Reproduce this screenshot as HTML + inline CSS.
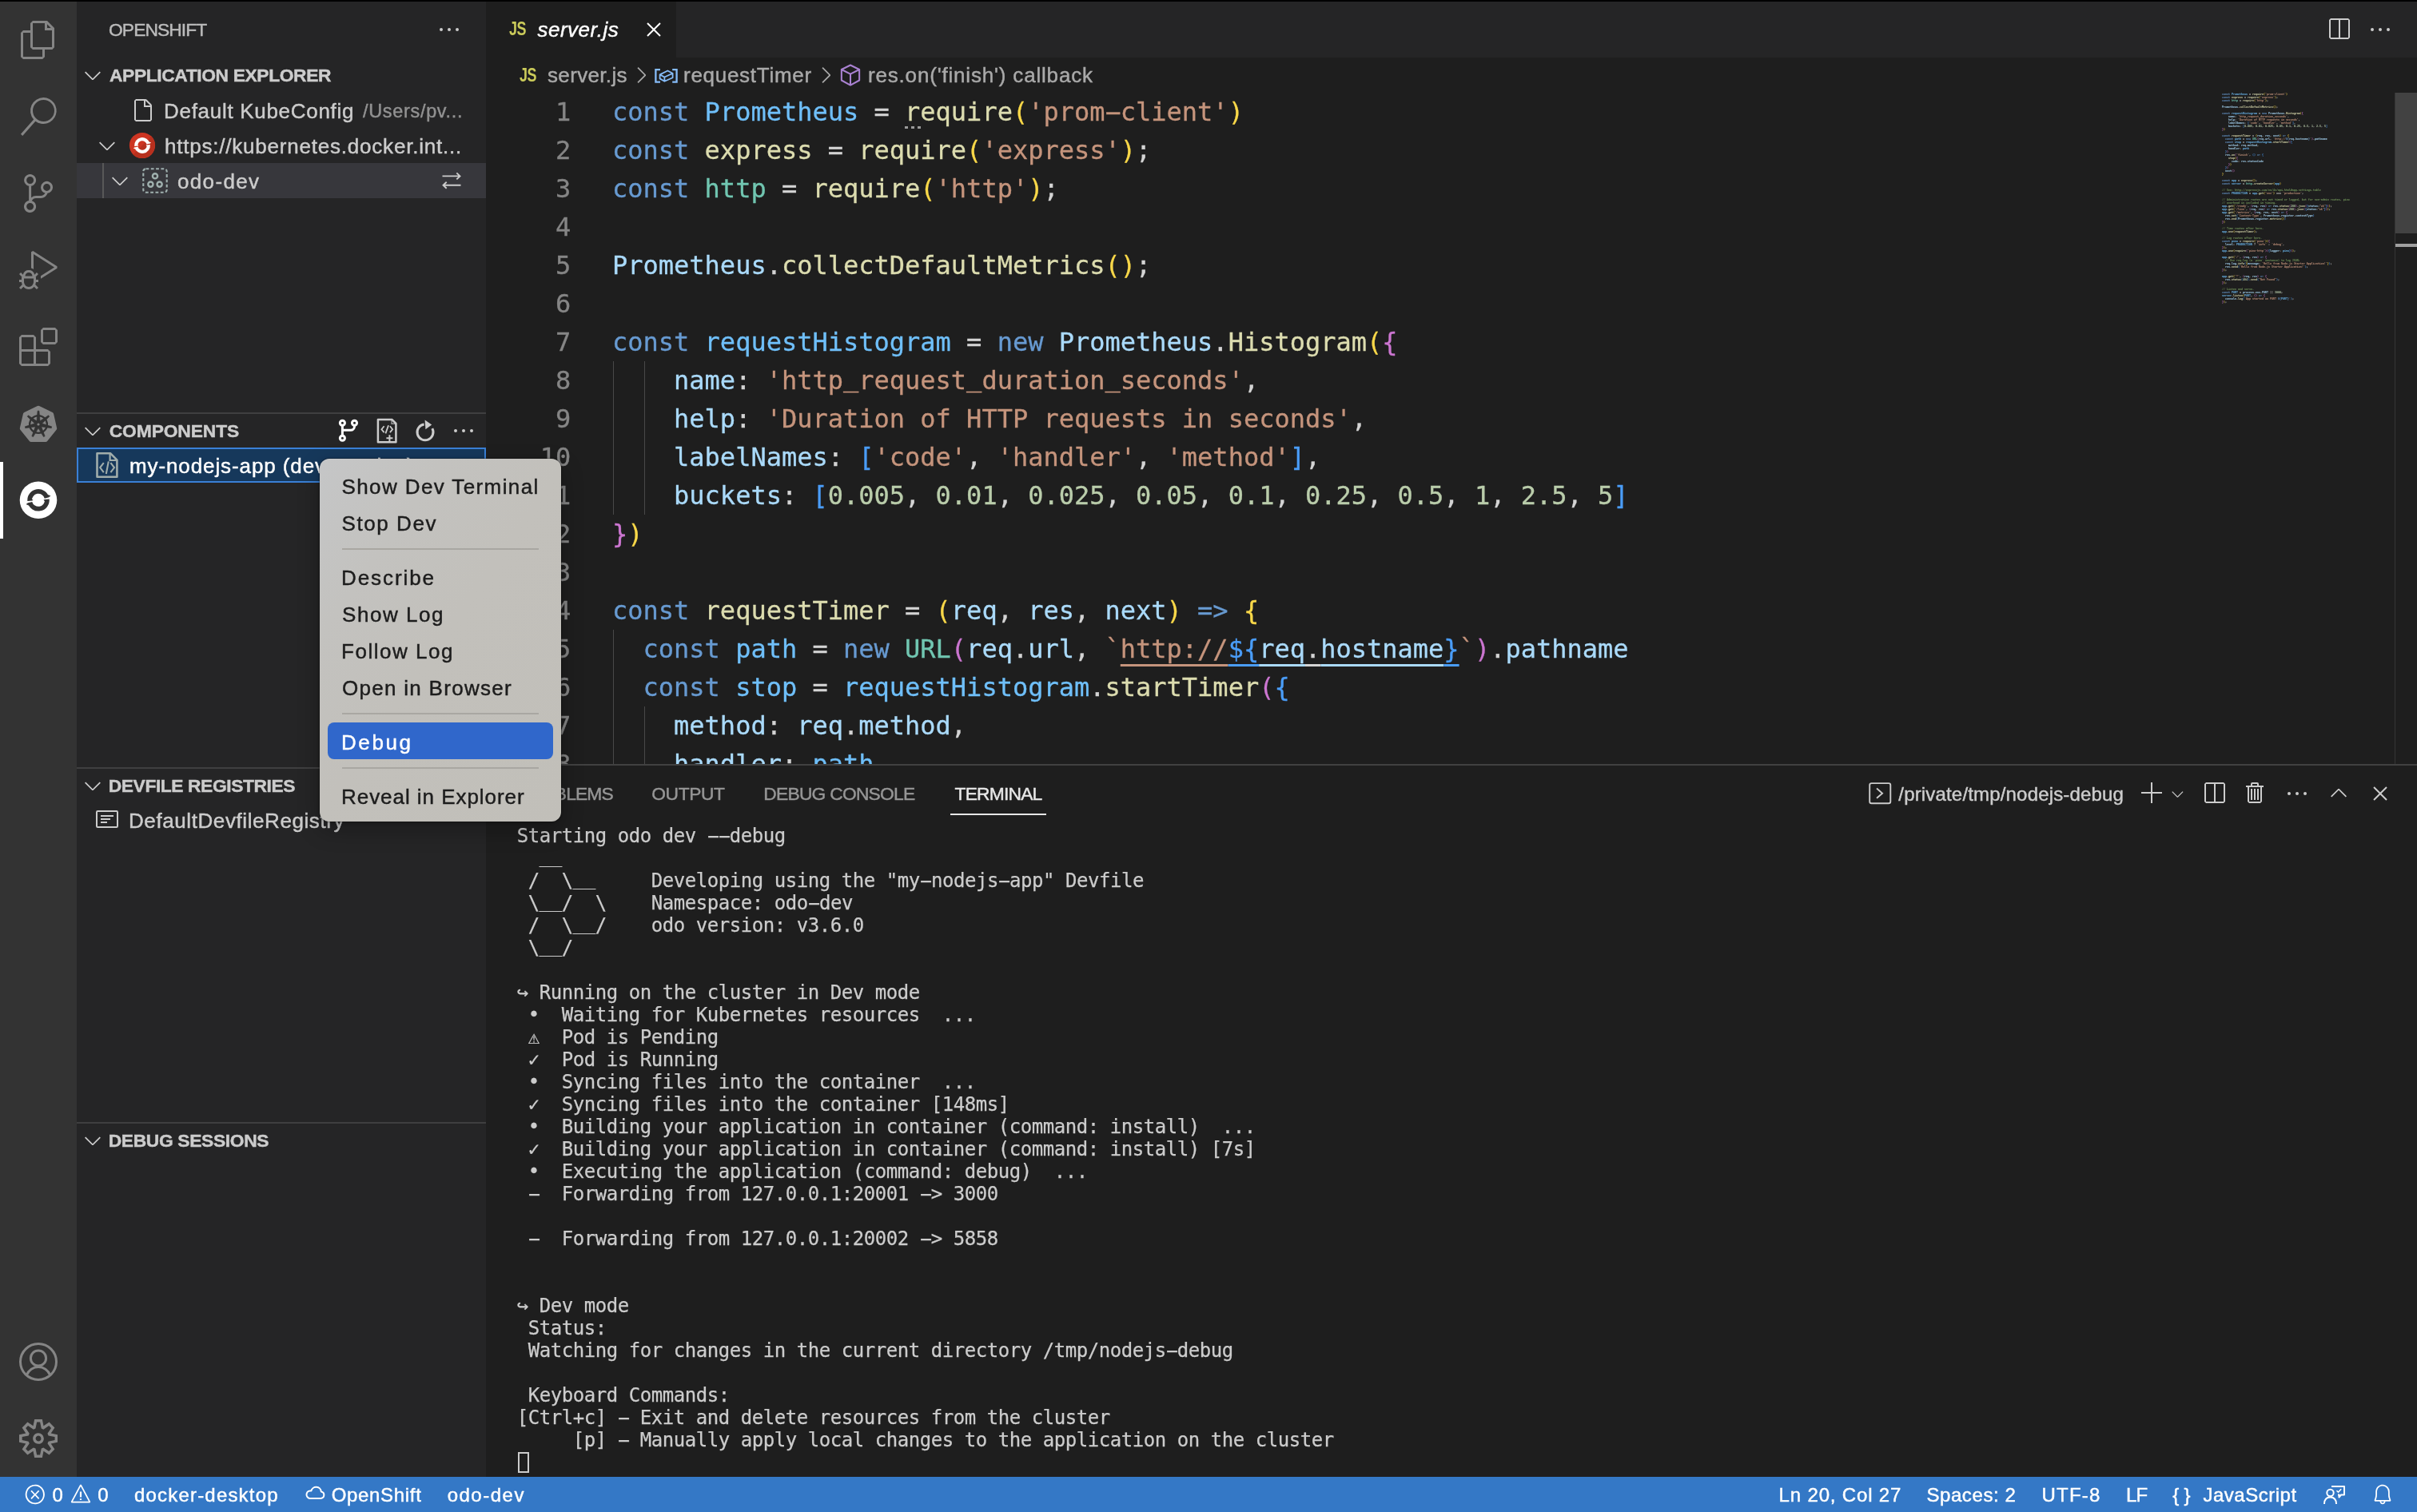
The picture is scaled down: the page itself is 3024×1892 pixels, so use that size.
<!DOCTYPE html>
<html lang="en"><head><meta charset="utf-8"><title>server.js - nodejs-debug - Visual Studio Code</title>
<style>
html,body{margin:0;padding:0}
body{width:3024px;height:1892px;background:#1e1e1e;position:relative;font-family:"Liberation Sans",sans-serif}
#root{position:absolute;left:0;top:0;width:3024px;height:1892px;overflow:hidden;will-change:transform}
.r,.t,.ic,.abs{position:absolute}
.t{white-space:pre;-webkit-text-stroke:.45px}
.ic{display:block;overflow:visible}
.mono{font-family:"DejaVu Sans Mono","Liberation Mono",monospace}
.code{position:absolute;left:767px;top:116px;font-family:"DejaVu Sans Mono","Liberation Mono",monospace;font-size:32px;line-height:48px;color:#d4d4d4;white-space:pre;-webkit-text-stroke:.3px}
.ln{position:absolute;left:608px;top:116px;width:106.25px;text-align:right;font-family:"DejaVu Sans Mono","Liberation Mono",monospace;font-size:32px;line-height:48px;color:#858585;white-space:pre;-webkit-text-stroke:.3px}
.k{color:#679ad1}.v{color:#aadafa}.c{color:#6fbff9}.f{color:#dcdcaf}.s{color:#c5947c}.n{color:#bacdab}.ty{color:#71c6b1}.m{color:#74985c}.p{color:#d4d4d4}
.b1{color:#f9d849}.b2{color:#cc76d1}.b3{color:#4a9df8}
.lnk span{text-decoration:underline;text-decoration-thickness:2.6px;text-underline-offset:8px;text-decoration-skip-ink:none}
.term{position:absolute;left:646.8px;top:1031.5px;font-family:"DejaVu Sans Mono","Liberation Mono",monospace;font-size:24px;line-height:28px;letter-spacing:-0.449px;color:#cccccc;white-space:pre;-webkit-text-stroke:.25px}
.term div{height:28px}
.mm{position:absolute;left:2780px;top:116px;font-family:"DejaVu Sans Mono","Liberation Mono",monospace;font-size:13.288px;line-height:16px;white-space:pre;color:#d4d4d4;opacity:.92;font-weight:bold;transform:scale(.25);transform-origin:0 0}
.mm div{height:16px}
.hy{display:inline-block;transform:scaleX(2.05)}
.us{position:relative;top:-.1em}

</style></head><body>
<div id="root">
<div class="r" style="left:0px;top:0px;width:3024px;height:2px;background:#000;"></div>
<div class="r" style="left:0px;top:2px;width:96px;height:1846px;background:#333333;"></div>
<div class="r" style="left:96px;top:2px;width:512px;height:1846px;background:#252526;"></div>
<div class="r" style="left:608px;top:2px;width:2416px;height:70px;background:#252526;"></div>
<div class="r" style="left:608px;top:2px;width:238px;height:70px;background:#1e1e1e;"></div>
<svg class="ic" style="left:24px;top:26px" width="48" height="48" viewBox="0 0 24 24" ><path fill="#858585" d="M17.5 0h-9L7 1.5V6H2.5L1 7.5v15.07L2.5 24h12.07L16 22.57V18h4.7l1.3-1.43V4.5L17.5 0zm0 2.12l2.38 2.38H17.5V2.12zm-3 20.38h-12v-15H7v9.07L8.5 18h6v4.5zm6-6h-12v-15H16V6h4.5v10.5z"/></svg>
<svg class="ic" style="left:24px;top:122px" width="48" height="48" viewBox="0 0 24 24" ><path fill="#858585" d="M15.25 0a8.25 8.25 0 0 0-6.18 13.72L1 22.88l1.12 1.12 8.05-9.12A8.251 8.251 0 1 0 15.25.01V0zm0 15a6.75 6.75 0 1 1 0-13.5 6.75 6.75 0 0 1 0 13.5z"/></svg>
<svg class="ic" style="left:24px;top:218px" width="48" height="48" viewBox="0 0 24 24" ><path fill="#858585" d="M21.007 8.222A3.738 3.738 0 0 0 15.045 5.2a3.737 3.737 0 0 0 1.156 6.583 2.988 2.988 0 0 1-2.668 1.67h-2.99a4.456 4.456 0 0 0-2.989 1.165V7.4a3.737 3.737 0 1 0-1.494 0v9.117a3.776 3.776 0 1 0 1.816.099 2.99 2.99 0 0 1 2.668-1.667h2.99a4.484 4.484 0 0 0 4.223-3.039 3.736 3.736 0 0 0 3.25-3.687zM4.565 3.738a2.242 2.242 0 1 1 4.484 0 2.242 2.242 0 0 1-4.484 0zm4.484 16.441a2.242 2.242 0 1 1-4.484 0 2.242 2.242 0 0 1 4.484 0zm8.221-9.715a2.242 2.242 0 1 1 0-4.485 2.242 2.242 0 0 1 0 4.485z"/></svg>
<svg class="ic" style="left:24px;top:314px" width="48" height="48" viewBox="0 0 24 24" ><path fill="#858585" d="M10.94 13.5l-1.32 1.32a3.73 3.73 0 0 0-7.24 0L1.06 13.5 0 14.56l1.72 1.72-.22.22V18H0v1.5h1.5v.08c.077.489.214.966.41 1.42L0 22.94 1.06 24l1.65-1.65A4.308 4.308 0 0 0 6 24a4.31 4.31 0 0 0 3.29-1.65L10.94 24 12 22.94 10.09 21c.198-.464.336-.951.41-1.45v-.1H12V18h-1.5v-1.5l-.22-.22L12 14.56l-1.06-1.06zM6 13.5a2.25 2.25 0 0 1 2.25 2.25h-4.5A2.25 2.25 0 0 1 6 13.5zm3 6a3.33 3.33 0 0 1-3 3 3.33 3.33 0 0 1-3-3v-2.25h6v2.25zm14.76-9.9v1.26L13.5 17.37V15.6l8.5-5.37L9 2v9.46a5.07 5.07 0 0 0-1.5-.72V.63L8.64 0l15.12 9.6z"/></svg>
<svg class="ic" style="left:24px;top:410px" width="48" height="48" viewBox="0 0 24 24" ><path fill="#858585" d="M13.5 1.5L15 0h7.5L24 1.5V9l-1.5 1.5H15L13.5 9V1.5zm1.5 0V9h7.5V1.5H15zM0 15V6l1.5-1.5H9L10.5 6v7.5H18l1.5 1.5v7.5L18 24H1.5L0 22.5V15zm9-1.5V6H1.5v7.5H9zM9 15H1.5v7.5H9V15zm1.5 7.5H18V15h-7.5v7.5z"/></svg>
<svg class="ic" style="left:0px;top:482px" width="96" height="96" viewBox="0 0 96 96"><polygon points="48.00,28.20 64.57,36.18 68.67,54.12 57.20,68.50 38.80,68.50 27.33,54.12 31.43,36.18" fill="#858585" stroke="#858585" stroke-width="5" stroke-linejoin="round"/><circle cx="48" cy="49.0" r="10.9" fill="none" stroke="#333333" stroke-width="2.3"/><polygon points="45.70,47.78 47.06,32.13 48.94,32.13 50.30,47.78" fill="#333333" stroke="#333333" stroke-width="0.6" stroke-linejoin="round"/><polygon points="47.52,46.44 60.60,37.74 61.78,39.22 50.39,50.03" fill="#333333" stroke="#333333" stroke-width="0.6" stroke-linejoin="round"/><polygon points="49.70,47.03 64.66,51.84 64.24,53.67 48.68,51.51" fill="#333333" stroke="#333333" stroke-width="0.6" stroke-linejoin="round"/><polygon points="50.60,49.10 56.17,63.79 54.47,64.61 46.46,51.10" fill="#333333" stroke="#333333" stroke-width="0.6" stroke-linejoin="round"/><polygon points="49.54,51.10 41.53,64.61 39.83,63.79 45.40,49.10" fill="#333333" stroke="#333333" stroke-width="0.6" stroke-linejoin="round"/><polygon points="47.32,51.51 31.76,53.67 31.34,51.84 46.30,47.03" fill="#333333" stroke="#333333" stroke-width="0.6" stroke-linejoin="round"/><polygon points="45.61,50.03 34.22,39.22 35.40,37.74 48.48,46.44" fill="#333333" stroke="#333333" stroke-width="0.6" stroke-linejoin="round"/><circle cx="48" cy="49.0" r="1.6" fill="#858585"/></svg>
<div class="r" style="left:0px;top:578px;width:4px;height:96px;background:#ffffff;"></div>
<svg class="ic" style="left:0px;top:578px" width="96" height="96" viewBox="0 0 96 96"><circle cx="48" cy="47.8" r="23.3" fill="#ffffff"/><path d="M37.14 48.75 A10.9 10.9 0 0 1 58.53 44.98" fill="none" stroke="#333333" stroke-width="5.7"/><path d="M58.86 46.85 A10.9 10.9 0 0 1 37.47 50.62" fill="none" stroke="#333333" stroke-width="5.7"/><polygon points="60.99,44.32 63.46,42.48 59.53,40.87" fill="#333333"/><polygon points="35.01,51.28 32.54,53.12 36.47,54.73" fill="#333333"/><polygon points="39.68,48.53 41.51,48.03 39.80,46.21" fill="#333333"/><polygon points="56.32,47.07 54.49,47.57 56.20,49.39" fill="#333333"/></svg>
<svg class="ic" style="left:24px;top:1680px" width="48" height="48" viewBox="0 0 48 48"><circle cx="24" cy="24" r="22.5" fill="none" stroke="#858585" stroke-width="3"/><circle cx="24" cy="19.5" r="9.6" fill="none" stroke="#858585" stroke-width="3"/><path d="M9.5 40.5 A15.5 15.5 0 0 1 38.5 40.5" fill="none" stroke="#858585" stroke-width="3"/></svg>
<svg class="ic" style="left:24px;top:1776px" width="48" height="48" viewBox="0 0 24 24" ><path fill="#858585" d="M19.85 8.75l4.15.83v4.84l-4.15.83 2.35 3.52-3.43 3.43-3.52-2.35-.83 4.15H9.58l-.83-4.15-3.52 2.35-3.43-3.43 2.35-3.52L0 14.42V9.58l4.15-.83L1.8 5.23 5.23 1.8l3.52 2.35L9.58 0h4.84l.83 4.15 3.52-2.35 3.43 3.43-2.35 3.52zm-1.57 5.07l4-.81v-2l-4-.81-.54-1.3 2.29-3.43-1.43-1.43-3.43 2.29-1.3-.54-.81-4h-2l-.81 4-1.3.54-3.43-2.29-1.43 1.43L6.38 8.9l-.54 1.3-4 .81v2l4 .81.54 1.3-2.29 3.43 1.43 1.43 3.43-2.29 1.3.54.81 4h2l.81-4 1.3-.54 3.43 2.29 1.43-1.43-2.29-3.43.54-1.3zm-8.186-4.672A3.43 3.43 0 0 1 12 8.57 3.44 3.44 0 0 1 15.43 12a3.43 3.43 0 1 1-5.336-2.852zm.956 4.274c.281.188.612.288.95.288A1.7 1.7 0 0 0 13.71 12a1.71 1.71 0 1 0-2.66 1.422z"/></svg>
<svg class="ic" style="left:546px;top:21px" width="32" height="32" viewBox="0 0 16 16" ><path fill="#cccccc" d="M4 8a1 1 0 1 1-2 0 1 1 0 0 1 2 0zm5 0a1 1 0 1 1-2 0 1 1 0 0 1 2 0zm5 0a1 1 0 1 1-2 0 1 1 0 0 1 2 0z"/></svg>
<svg class="ic" style="left:100px;top:78px" width="32" height="32" viewBox="0 0 16 16" ><path fill="#cccccc" d="M7.976 10.072l4.357-4.357.62.618L8.284 11h-.618L3 6.333l.619-.618 4.357 4.357z"/></svg>
<div class="r" style="left:96px;top:516px;width:512px;height:2px;background:#3f3f40;"></div>
<svg class="ic" style="left:100px;top:523px" width="32" height="32" viewBox="0 0 16 16" ><path fill="#cccccc" d="M7.976 10.072l4.357-4.357.62.618L8.284 11h-.618L3 6.333l.619-.618 4.357 4.357z"/></svg>
<div class="r" style="left:96px;top:960px;width:512px;height:2px;background:#3f3f40;"></div>
<svg class="ic" style="left:100px;top:967px" width="32" height="32" viewBox="0 0 16 16" ><path fill="#cccccc" d="M7.976 10.072l4.357-4.357.62.618L8.284 11h-.618L3 6.333l.619-.618 4.357 4.357z"/></svg>
<div class="r" style="left:96px;top:1404px;width:512px;height:2px;background:#3f3f40;"></div>
<svg class="ic" style="left:100px;top:1411px" width="32" height="32" viewBox="0 0 16 16" ><path fill="#cccccc" d="M7.976 10.072l4.357-4.357.62.618L8.284 11h-.618L3 6.333l.619-.618 4.357 4.357z"/></svg>
<svg class="ic" style="left:162px;top:122px" width="32" height="32" viewBox="0 0 16 16" ><path fill="#cccccc" d="M13.71 4.29l-3-3L10 1H4L3 2v12l1 1h9l1-1V5l-.29-.71zM13 14H4V2h5v4h4v8zm-3-9V2l3 3h-3z"/></svg>
<svg class="ic" style="left:118px;top:166px" width="32" height="32" viewBox="0 0 16 16" ><path fill="#cccccc" d="M7.976 10.072l4.357-4.357.62.618L8.284 11h-.618L3 6.333l.619-.618 4.357 4.357z"/></svg>
<svg class="ic" style="left:162px;top:166px" width="32" height="32" viewBox="0 0 32 32"><circle cx="16" cy="16" r="16.1" fill="#cd3522"/><path d="M27.38 4.62 A16.1 16.1 0 0 1 4.62 27.38 Z" fill="#b7301e"/><path d="M8.24 16.82 A7.8 7.8 0 0 1 23.57 14.11" fill="none" stroke="#ffffff" stroke-width="4.2"/><path d="M23.76 15.18 A7.8 7.8 0 0 1 8.43 17.89" fill="none" stroke="#ffffff" stroke-width="4.2"/><polygon points="25.31,13.68 27.13,12.38 24.31,11.20" fill="#ffffff"/><polygon points="6.69,18.32 4.87,19.62 7.69,20.80" fill="#ffffff"/><polygon points="10.03,16.63 11.39,16.24 10.09,14.96" fill="#ffffff"/><polygon points="21.97,15.37 20.61,15.76 21.91,17.04" fill="#ffffff"/></svg>
<div class="r" style="left:96px;top:204px;width:512px;height:44px;background:#37373c;"></div>
<div class="r" style="left:128px;top:204px;width:2px;height:44px;background:#585858;"></div>
<svg class="ic" style="left:134px;top:210px" width="32" height="32" viewBox="0 0 16 16" ><path fill="#cccccc" d="M7.976 10.072l4.357-4.357.62.618L8.284 11h-.618L3 6.333l.619-.618 4.357 4.357z"/></svg>
<svg class="ic" style="left:178px;top:210px" width="32" height="32" viewBox="0 0 32 32"><rect x="1.3" y="1.3" width="29.4" height="29.4" rx="3.2" fill="none" stroke="#9fb0ae" stroke-width="2.1" stroke-dasharray="3.8 2.5"/><circle cx="16" cy="10.3" r="3.1" fill="none" stroke="#9fb0ae" stroke-width="2.4"/><circle cx="10.4" cy="20.6" r="3.1" fill="none" stroke="#9fb0ae" stroke-width="2.4"/><circle cx="21.6" cy="20.6" r="3.1" fill="none" stroke="#9fb0ae" stroke-width="2.4"/></svg>
<svg class="ic" style="left:552px;top:214px" width="26" height="24" viewBox="0 0 26 24"><path d="M1.5 6.4 H23.5 M19.3 2.4 L23.5 6.4 L19.3 10.4 M24.5 17.8 H2.5 M6.7 13.8 L2.5 17.8 L6.7 21.8" fill="none" stroke="#cccccc" stroke-width="1.9"/></svg>
<svg class="ic" style="left:420px;top:523px" width="32" height="32" viewBox="0 0 32 32"><circle cx="8.4" cy="6.2" r="3.05" fill="none" stroke="#ffffff" stroke-width="3"/><circle cx="8.4" cy="25.3" r="3.05" fill="none" stroke="#ffffff" stroke-width="3"/><circle cx="23.5" cy="6.2" r="3.05" fill="none" stroke="#ffffff" stroke-width="3"/><path d="M8.4 9.5 V22 M23.5 9.5 v1 a4.8 4.8 0 0 1 -4.8 4.8 H8.4" fill="none" stroke="#ffffff" stroke-width="3"/></svg>
<svg class="ic" style="left:468px;top:522px" width="32" height="34" viewBox="0 0 32 34"><path d="M4.9 2.9 H22.3 L27.4 8 V31.2 H4.9 Z" fill="none" stroke="#cccccc" stroke-width="2.5" stroke-linejoin="round"/><path d="M22 3.5 V8.3 H27" fill="none" stroke="#cccccc" stroke-width="1.4" opacity=".7"/><path d="M12.6 11.3 L9.4 15.2 L12.6 19.1 M19.9 11.3 L23.1 15.2 L19.9 19.1 M18 10.3 L14.4 20.4" fill="none" stroke="#cccccc" stroke-width="1.8"/><path d="M19.4 22.3 V30.2 M15.4 26.3 H23.4" fill="none" stroke="#cccccc" stroke-width="2"/></svg>
<svg class="ic" style="left:516px;top:523px" width="32" height="32" viewBox="0 0 32 32"><path d="M24.83 13.11 A10 10 0 1 1 14.61 7.90" fill="none" stroke="#cccccc" stroke-width="3"/><polygon points="15.6,2.6 24.2,8.4 16.4,14.2" fill="#cccccc"/></svg>
<svg class="ic" style="left:564px;top:523px" width="32" height="32" viewBox="0 0 16 16" ><path fill="#cccccc" d="M4 8a1 1 0 1 1-2 0 1 1 0 0 1 2 0zm5 0a1 1 0 1 1-2 0 1 1 0 0 1 2 0zm5 0a1 1 0 1 1-2 0 1 1 0 0 1 2 0z"/></svg>
<div class="r" style="left:96px;top:560px;width:512px;height:44px;background:#16385b;box-shadow:inset 0 0 0 2px #3a80d6"></div>
<svg class="ic" style="left:118px;top:564px" width="32" height="36" viewBox="0 0 32 36"><path d="M3.5 3.2 H20 L28.4 11.6 V32.7 H3.5 Z" fill="none" stroke="#a0adab" stroke-width="2.6" stroke-linejoin="round"/><path d="M19.6 3.6 V12 H28" fill="none" stroke="#a0adab" stroke-width="2.2"/><path d="M11.8 15.2 L7.2 21.1 L11.8 27.1 M20.4 15.2 L25 21.1 L20.4 27.1 M17.8 13.4 L14.8 29" fill="none" stroke="#a0adab" stroke-width="2.1"/></svg>
<svg class="ic" style="left:120px;top:1014px" width="28" height="22" viewBox="0 0 28 22"><rect x="1" y="1" width="26" height="20" rx="1.2" fill="none" stroke="#cccccc" stroke-width="2"/><path d="M6 7 H22 M6 11 H18 M6 15 H14" fill="none" stroke="#cccccc" stroke-width="1.8"/></svg>
<div class="t" style="left:637px;top:25.3px;font-size:23px;line-height:23px;font-weight:bold;color:#cbcb5a;letter-spacing:-0.6px;-webkit-text-stroke:0;transform:scaleX(.78);transform-origin:0 0">JS</div>
<svg class="ic" style="left:802px;top:21px" width="32" height="32" viewBox="0 0 16 16" ><path fill="#ffffff" d="M8 8.707l3.646 3.647.708-.707L8.707 8l3.647-3.646-.707-.708L8 7.293 4.354 3.646l-.707.708L7.293 8l-3.646 3.646.707.708L8 8.707z"/></svg>
<svg class="ic" style="left:2910px;top:21px" width="32" height="32" viewBox="0 0 16 16" ><path fill="#cccccc" d="M14 1H3L2 2v11l1 1h11l1-1V2l-1-1zM8 13H3V2h5v11zm6 0H9V2h5v11z"/></svg>
<svg class="ic" style="left:2962px;top:21px" width="32" height="32" viewBox="0 0 16 16" ><path fill="#cccccc" d="M4 8a1 1 0 1 1-2 0 1 1 0 0 1 2 0zm5 0a1 1 0 1 1-2 0 1 1 0 0 1 2 0zm5 0a1 1 0 1 1-2 0 1 1 0 0 1 2 0z"/></svg>
<div class="t" style="left:649.5px;top:82.6px;font-size:23px;line-height:23px;font-weight:bold;color:#cbcb5a;letter-spacing:-0.6px;-webkit-text-stroke:0;transform:scaleX(.78);transform-origin:0 0">JS</div>
<svg class="ic" style="left:786px;top:78px" width="32" height="32" viewBox="0 0 16 16" ><path fill="#a9a9a9" d="M10.072 8.024L5.715 3.667l.618-.62L11 7.716v.618L6.333 13l-.618-.619 4.357-4.357z"/></svg>
<svg class="ic" style="left:1017px;top:78px" width="32" height="32" viewBox="0 0 16 16" ><path fill="#a9a9a9" d="M10.072 8.024L5.715 3.667l.618-.62L11 7.716v.618L6.333 13l-.618-.619 4.357-4.357z"/></svg>
<svg class="ic" style="left:818px;top:80px" width="32" height="28" viewBox="0 0 32 28"><path d="M8 7.1 H2.4 V22.7 H8 M23.2 7.1 H28.6 V22.7 H23.2" fill="none" stroke="#86bcf9" stroke-width="2.3"/><path d="M7.6 13.4 L17.3 8.5 L23.6 11.8 V17.2 L13.4 21.8 L7.6 18.4 Z M7.6 13.4 L13.4 16.5 L23.6 11.8 M13.4 16.5 V21.8" fill="none" stroke="#86bcf9" stroke-width="1.8" stroke-linejoin="round"/></svg>
<svg class="ic" style="left:1051px;top:80px" width="26" height="28" viewBox="0 0 28 30"><path d="M14 1.5 L26 7.5 V22 L14 28.5 L2 22 V7.5 Z M2 7.5 L14 13.5 L26 7.5 M14 13.5 V28.5" fill="none" stroke="#aa82d2" stroke-width="2.2" stroke-linejoin="round"/></svg>
<div class="abs" style="left:608px;top:116px;width:2416px;height:840px;overflow:hidden"><div class="ln" style="left:0;top:0"><div>1</div><div>2</div><div>3</div><div>4</div><div>5</div><div>6</div><div>7</div><div>8</div><div>9</div><div>10</div><div>11</div><div>12</div><div>13</div><div>14</div><div>15</div><div>16</div><div>17</div><div>18</div></div><div class="code" style="left:158px;top:0"><div><span class="k">const</span> <span class="c">Prometheus</span> <span class="p">=</span> <span class="f">require</span><span class="b1">(</span><span class="s">'prom<span class="hy">-</span>client'</span><span class="b1">)</span></div><div><span class="k">const</span> <span class="f">express</span> <span class="p">=</span> <span class="f">require</span><span class="b1">(</span><span class="s">'express'</span><span class="b1">)</span><span class="p">;</span></div><div><span class="k">const</span> <span class="ty">http</span> <span class="p">=</span> <span class="f">require</span><span class="b1">(</span><span class="s">'http'</span><span class="b1">)</span><span class="p">;</span></div><div> </div><div><span class="v">Prometheus</span><span class="p">.</span><span class="f">collectDefaultMetrics</span><span class="b1">(</span><span class="b1">)</span><span class="p">;</span></div><div> </div><div><span class="k">const</span> <span class="c">requestHistogram</span> <span class="p">=</span> <span class="k">new</span> <span class="v">Prometheus</span><span class="p">.</span><span class="f">Histogram</span><span class="b1">(</span><span class="b2">{</span></div><div>    <span class="v">name</span><span class="p">:</span> <span class="s">'http<span class="us">_</span>request<span class="us">_</span>duration<span class="us">_</span>seconds'</span><span class="p">,</span></div><div>    <span class="v">help</span><span class="p">:</span> <span class="s">'Duration of HTTP requests in seconds'</span><span class="p">,</span></div><div>    <span class="v">labelNames</span><span class="p">:</span> <span class="b3">[</span><span class="s">'code'</span><span class="p">,</span> <span class="s">'handler'</span><span class="p">,</span> <span class="s">'method'</span><span class="b3">]</span><span class="p">,</span></div><div>    <span class="v">buckets</span><span class="p">:</span> <span class="b3">[</span><span class="n">0.005</span><span class="p">,</span> <span class="n">0.01</span><span class="p">,</span> <span class="n">0.025</span><span class="p">,</span> <span class="n">0.05</span><span class="p">,</span> <span class="n">0.1</span><span class="p">,</span> <span class="n">0.25</span><span class="p">,</span> <span class="n">0.5</span><span class="p">,</span> <span class="n">1</span><span class="p">,</span> <span class="n">2.5</span><span class="p">,</span> <span class="n">5</span><span class="b3">]</span></div><div><span class="b2">}</span><span class="b1">)</span></div><div> </div><div><span class="k">const</span> <span class="f">requestTimer</span> <span class="p">=</span> <span class="b1">(</span><span class="v">req</span><span class="p">,</span> <span class="v">res</span><span class="p">,</span> <span class="v">next</span><span class="b1">)</span> <span class="k">=&gt;</span> <span class="b1">{</span></div><div>  <span class="k">const</span> <span class="c">path</span> <span class="p">=</span> <span class="k">new</span> <span class="ty">URL</span><span class="b2">(</span><span class="v">req</span><span class="p">.</span><span class="v">url</span><span class="p">,</span> <span class="s">`</span><span class="lnk"><span class="s">http://</span><span class="b3">${</span><span class="v">req</span><span class="p">.</span><span class="v">hostname</span><span class="b3">}</span></span><span class="s">`</span><span class="b2">)</span><span class="p">.</span><span class="v">pathname</span></div><div>  <span class="k">const</span> <span class="c">stop</span> <span class="p">=</span> <span class="c">requestHistogram</span><span class="p">.</span><span class="f">startTimer</span><span class="b2">(</span><span class="b3">{</span></div><div>    <span class="v">method</span><span class="p">:</span> <span class="v">req</span><span class="p">.</span><span class="v">method</span><span class="p">,</span></div><div>    <span class="v">handler</span><span class="p">:</span> <span class="c">path</span></div></div><div class="r" style="left:159px;top:336px;width:1.4px;height:192px;background:#484848;"></div><div class="r" style="left:197.70000000000005px;top:336px;width:1.4px;height:192px;background:#484848;"></div><div class="r" style="left:159px;top:672px;width:1.4px;height:192px;background:#484848;"></div><div class="r" style="left:197.70000000000005px;top:768px;width:1.4px;height:96px;background:#484848;"></div><div class="r" style="left:524px;top:42px;width:4px;height:3px;background:#9a9a9a;"></div><div class="r" style="left:532px;top:42px;width:4px;height:3px;background:#9a9a9a;"></div><div class="r" style="left:540px;top:42px;width:4px;height:3px;background:#9a9a9a;"></div></div>
<div class="mm"><div><span class="k">const</span> <span class="c">Prometheus</span> <span class="p">=</span> <span class="f">require</span><span class="b1">(</span><span class="s">'prom-client'</span><span class="b1">)</span></div><div><span class="k">const</span> <span class="f">express</span> <span class="p">=</span> <span class="f">require</span><span class="b1">(</span><span class="s">'express'</span><span class="b1">)</span><span class="p">;</span></div><div><span class="k">const</span> <span class="ty">http</span> <span class="p">=</span> <span class="f">require</span><span class="b1">(</span><span class="s">'http'</span><span class="b1">)</span><span class="p">;</span></div><div> </div><div><span class="v">Prometheus</span><span class="p">.</span><span class="f">collectDefaultMetrics</span><span class="b1">(</span><span class="b1">)</span><span class="p">;</span></div><div> </div><div><span class="k">const</span> <span class="c">requestHistogram</span> <span class="p">=</span> <span class="k">new</span> <span class="v">Prometheus</span><span class="p">.</span><span class="f">Histogram</span><span class="b1">(</span><span class="b2">{</span></div><div>    <span class="v">name</span><span class="p">:</span> <span class="s">'http_request_duration_seconds'</span><span class="p">,</span></div><div>    <span class="v">help</span><span class="p">:</span> <span class="s">'Duration of HTTP requests in seconds'</span><span class="p">,</span></div><div>    <span class="v">labelNames</span><span class="p">:</span> <span class="b3">[</span><span class="s">'code'</span><span class="p">,</span> <span class="s">'handler'</span><span class="p">,</span> <span class="s">'method'</span><span class="b3">]</span><span class="p">,</span></div><div>    <span class="v">buckets</span><span class="p">:</span> <span class="b3">[</span><span class="n">0.005</span><span class="p">,</span> <span class="n">0.01</span><span class="p">,</span> <span class="n">0.025</span><span class="p">,</span> <span class="n">0.05</span><span class="p">,</span> <span class="n">0.1</span><span class="p">,</span> <span class="n">0.25</span><span class="p">,</span> <span class="n">0.5</span><span class="p">,</span> <span class="n">1</span><span class="p">,</span> <span class="n">2.5</span><span class="p">,</span> <span class="n">5</span><span class="b3">]</span></div><div><span class="b2">}</span><span class="b1">)</span></div><div> </div><div><span class="k">const</span> <span class="f">requestTimer</span> <span class="p">=</span> <span class="b1">(</span><span class="v">req</span><span class="p">,</span> <span class="v">res</span><span class="p">,</span> <span class="v">next</span><span class="b1">)</span> <span class="k">=&gt;</span> <span class="b1">{</span></div><div>  <span class="k">const</span> <span class="c">path</span> <span class="p">=</span> <span class="k">new</span> <span class="ty">URL</span><span class="b2">(</span><span class="v">req</span><span class="p">.</span><span class="v">url</span><span class="p">,</span> <span class="s">`http://</span><span class="k">${</span><span class="v">req</span><span class="p">.</span><span class="v">hostname</span><span class="k">}</span><span class="s">`</span><span class="b2">)</span><span class="p">.</span><span class="v">pathname</span></div><div>  <span class="k">const</span> <span class="c">stop</span> <span class="p">=</span> <span class="c">requestHistogram</span><span class="p">.</span><span class="f">startTimer</span><span class="b2">(</span><span class="b3">{</span></div><div>    <span class="v">method</span><span class="p">:</span> <span class="v">req</span><span class="p">.</span><span class="v">method</span><span class="p">,</span></div><div>    <span class="v">handler</span><span class="p">:</span> <span class="c">path</span></div><div>  <span class="b3">}</span><span class="b2">)</span></div><div>  <span class="v">res</span><span class="p">.</span><span class="f">on</span><span class="b2">(</span><span class="s">'finish'</span><span class="p">,</span> <span class="b3">(</span><span class="b3">)</span> <span class="k">=&gt;</span> <span class="b3">{</span></div><div>    <span class="f">stop</span><span class="b1">(</span><span class="b2">{</span></div><div>      <span class="v">code</span><span class="p">:</span> <span class="v">res</span><span class="p">.</span><span class="v">statusCode</span></div><div>    <span class="b2">}</span><span class="b1">)</span></div><div>  <span class="b3">}</span><span class="b2">)</span></div><div>  <span class="v">next</span><span class="b2">(</span><span class="b2">)</span></div><div><span class="b1">}</span></div><div> </div><div><span class="k">const</span> <span class="c">app</span> <span class="p">=</span> <span class="f">express</span><span class="b1">(</span><span class="b1">)</span><span class="p">;</span></div><div><span class="k">const</span> <span class="c">server</span> <span class="p">=</span> <span class="ty">http</span><span class="p">.</span><span class="f">createServer</span><span class="b1">(</span><span class="c">app</span><span class="b1">)</span></div><div> </div><div><span class="m">// See: http://expressjs.com/en/4x/api.html#app.settings.table</span></div><div><span class="k">const</span> <span class="c">PRODUCTION</span> <span class="p">=</span> <span class="c">app</span><span class="p">.</span><span class="f">get</span><span class="b1">(</span><span class="s">'env'</span><span class="b1">)</span> <span class="p">=</span><span class="p">=</span><span class="p">=</span> <span class="s">'production'</span><span class="p">;</span></div><div> </div><div><span class="m">// Administrative routes are not timed or logged, but for non-admin routes, pino</span></div><div><span class="m">// overhead is included in timing.</span></div><div><span class="c">app</span><span class="p">.</span><span class="f">get</span><span class="b1">(</span><span class="s">'/ready'</span><span class="p">,</span> <span class="b2">(</span><span class="v">req</span><span class="p">,</span> <span class="v">res</span><span class="b2">)</span> <span class="k">=&gt;</span> <span class="v">res</span><span class="p">.</span><span class="f">status</span><span class="b2">(</span><span class="n">200</span><span class="b2">)</span><span class="p">.</span><span class="f">json</span><span class="b2">(</span><span class="b3">{</span><span class="v">status</span><span class="p">:</span><span class="s">"ok"</span><span class="b3">}</span><span class="b2">)</span><span class="b1">)</span><span class="p">;</span></div><div><span class="c">app</span><span class="p">.</span><span class="f">get</span><span class="b1">(</span><span class="s">'/live'</span><span class="p">,</span> <span class="b2">(</span><span class="v">req</span><span class="p">,</span> <span class="v">res</span><span class="b2">)</span> <span class="k">=&gt;</span> <span class="v">res</span><span class="p">.</span><span class="f">status</span><span class="b2">(</span><span class="n">200</span><span class="b2">)</span><span class="p">.</span><span class="f">json</span><span class="b2">(</span><span class="b3">{</span><span class="v">status</span><span class="p">:</span><span class="s">"ok"</span><span class="b3">}</span><span class="b2">)</span><span class="b1">)</span><span class="p">;</span></div><div><span class="c">app</span><span class="p">.</span><span class="f">get</span><span class="b1">(</span><span class="s">'/metrics'</span><span class="p">,</span> <span class="b2">(</span><span class="v">req</span><span class="p">,</span> <span class="v">res</span><span class="p">,</span> <span class="v">next</span><span class="b2">)</span> <span class="k">=&gt;</span> <span class="b2">{</span></div><div>  <span class="v">res</span><span class="p">.</span><span class="f">set</span><span class="b3">(</span><span class="s">'Content-Type'</span><span class="p">,</span> <span class="v">Prometheus</span><span class="p">.</span><span class="v">register</span><span class="p">.</span><span class="v">contentType</span><span class="b3">)</span></div><div>  <span class="v">res</span><span class="p">.</span><span class="f">end</span><span class="b3">(</span><span class="v">Prometheus</span><span class="p">.</span><span class="v">register</span><span class="p">.</span><span class="f">metrics</span><span class="b1">(</span><span class="b1">)</span><span class="b3">)</span></div><div><span class="b2">}</span><span class="b1">)</span></div><div> </div><div><span class="m">// Time routes after here.</span></div><div><span class="c">app</span><span class="p">.</span><span class="f">use</span><span class="b1">(</span><span class="f">requestTimer</span><span class="b1">)</span><span class="p">;</span></div><div> </div><div><span class="m">// Log routes after here.</span></div><div><span class="k">const</span> <span class="c">pino</span> <span class="p">=</span> <span class="f">require</span><span class="b1">(</span><span class="s">'pino'</span><span class="b1">)</span><span class="b1">(</span><span class="b2">{</span></div><div>  <span class="v">level</span><span class="p">:</span> <span class="c">PRODUCTION</span> <span class="p">?</span> <span class="s">'info'</span> <span class="p">:</span> <span class="s">'debug'</span><span class="p">,</span></div><div><span class="b2">}</span><span class="b1">)</span><span class="p">;</span></div><div><span class="c">app</span><span class="p">.</span><span class="f">use</span><span class="b1">(</span><span class="f">require</span><span class="b2">(</span><span class="s">'pino-http'</span><span class="b2">)</span><span class="b2">(</span><span class="b3">{</span><span class="v">logger</span><span class="p">:</span> <span class="c">pino</span><span class="b3">}</span><span class="b2">)</span><span class="b1">)</span><span class="p">;</span></div><div> </div><div><span class="c">app</span><span class="p">.</span><span class="f">get</span><span class="b1">(</span><span class="s">'/'</span><span class="p">,</span> <span class="b2">(</span><span class="v">req</span><span class="p">,</span> <span class="v">res</span><span class="b2">)</span> <span class="k">=&gt;</span> <span class="b2">{</span></div><div>  <span class="m">// Use req.log (a `pino` instance) to log JSON:</span></div><div>  <span class="v">req</span><span class="p">.</span><span class="v">log</span><span class="p">.</span><span class="f">info</span><span class="b3">(</span><span class="b1">{</span><span class="v">message</span><span class="p">:</span> <span class="s">'Hello from Node.js Starter Application!'</span><span class="b1">}</span><span class="b3">)</span><span class="p">;</span></div><div>  <span class="v">res</span><span class="p">.</span><span class="f">send</span><span class="b3">(</span><span class="s">'Hello from Node.js Starter Application!'</span><span class="b3">)</span><span class="p">;</span></div><div><span class="b2">}</span><span class="b1">)</span><span class="p">;</span></div><div> </div><div><span class="c">app</span><span class="p">.</span><span class="f">get</span><span class="b1">(</span><span class="s">'*'</span><span class="p">,</span> <span class="b2">(</span><span class="v">req</span><span class="p">,</span> <span class="v">res</span><span class="b2">)</span> <span class="k">=&gt;</span> <span class="b2">{</span></div><div>  <span class="v">res</span><span class="p">.</span><span class="f">status</span><span class="b3">(</span><span class="n">404</span><span class="b3">)</span><span class="p">.</span><span class="f">send</span><span class="b3">(</span><span class="s">"Not Found"</span><span class="b3">)</span><span class="p">;</span></div><div><span class="b2">}</span><span class="b1">)</span><span class="p">;</span></div><div> </div><div><span class="m">// Listen and serve.</span></div><div><span class="k">const</span> <span class="c">PORT</span> <span class="p">=</span> <span class="v">process</span><span class="p">.</span><span class="v">env</span><span class="p">.</span><span class="v">PORT</span> <span class="p">|</span><span class="p">|</span> <span class="n">3000</span><span class="p">;</span></div><div><span class="c">server</span><span class="p">.</span><span class="f">listen</span><span class="b1">(</span><span class="c">PORT</span><span class="p">,</span> <span class="b2">(</span><span class="b2">)</span> <span class="k">=&gt;</span> <span class="b2">{</span></div><div>  <span class="v">console</span><span class="p">.</span><span class="f">log</span><span class="b3">(</span><span class="s">`App started on PORT </span><span class="k">${</span><span class="c">PORT</span><span class="k">}</span><span class="s">`</span><span class="b3">)</span><span class="p">;</span></div><div><span class="b2">}</span><span class="b1">)</span><span class="p">;</span></div></div>
<div class="r" style="left:2996px;top:116px;width:1px;height:840px;background:#353535;"></div>
<div class="r" style="left:2997px;top:116px;width:27px;height:176px;background:#424242;"></div>
<div class="r" style="left:2997px;top:305px;width:27px;height:4px;background:#a0a0a0;"></div>
<div class="r" style="left:608px;top:956px;width:2416px;height:2px;background:#414141;"></div>
<div class="r" style="left:1189px;top:1017.6px;width:120px;height:2.2px;background:#e7e7e7;"></div>
<svg class="ic" style="left:2337.5px;top:979px" width="28.5" height="27.4" viewBox="0 0 30 29"><rect x="1.2" y="1.2" width="27.6" height="26.6" rx="2.5" fill="none" stroke="#cccccc" stroke-width="2"/><path d="M10.5 8 L18 14.5 L10.5 21" fill="none" stroke="#cccccc" stroke-width="2"/></svg>
<svg class="ic" style="left:2676.5px;top:977px" width="32" height="32" viewBox="0 0 16 16" ><path fill="#cccccc" d="M14 7v1H8v6H7V8H1V7h6V1h1v6h6z"/></svg>
<svg class="ic" style="left:2712.7px;top:981.7px" width="22.9" height="22.9" viewBox="0 0 16 16" ><path fill="#cccccc" d="M7.976 10.072l4.357-4.357.62.618L8.284 11h-.618L3 6.333l.619-.618 4.357 4.357z"/></svg>
<svg class="ic" style="left:2754px;top:977px" width="32" height="32" viewBox="0 0 16 16" ><path fill="#cccccc" d="M14 1H3L2 2v11l1 1h11l1-1V2l-1-1zM8 13H3V2h5v11zm6 0H9V2h5v11z"/></svg>
<svg class="ic" style="left:2806px;top:977px" width="32" height="32" viewBox="0 0 16 16" ><path fill="#cccccc" d="M10 3h3v1h-1v9l-1 1H4l-1-1V4H2V3h3V2a1 1 0 0 1 1-1h3a1 1 0 0 1 1 1v1zM9 2H6v1h3V2zM4 13h7V4H4v9zm2-8H5v7h1V5zm1 0h1v7H7V5zm2 0h1v7H9V5z"/></svg>
<svg class="ic" style="left:2858px;top:977px" width="32" height="32" viewBox="0 0 16 16" ><path fill="#cccccc" d="M4 8a1 1 0 1 1-2 0 1 1 0 0 1 2 0zm5 0a1 1 0 1 1-2 0 1 1 0 0 1 2 0zm5 0a1 1 0 1 1-2 0 1 1 0 0 1 2 0z"/></svg>
<svg class="ic" style="left:2910px;top:977px" width="32" height="32" viewBox="0 0 16 16" ><path fill="#cccccc" d="M8.024 5.928l-4.357 4.357-.62-.618L7.716 5h.618L13 9.667l-.619.618-4.357-4.357z"/></svg>
<svg class="ic" style="left:2962px;top:977px" width="32" height="32" viewBox="0 0 16 16" ><path fill="#cccccc" d="M8 8.707l3.646 3.647.708-.707L8.707 8l3.647-3.646-.707-.708L8 7.293 4.354 3.646l-.707.708L7.293 8l-3.646 3.646.707.708L8 8.707z"/></svg>
<div class="term"><div>Starting odo dev <span class="hy">-</span><span class="hy">-</span>debug</div><div>  <span class="us">_</span><span class="us">_</span></div><div> /  \<span class="us">_</span><span class="us">_</span>     Developing using the "my<span class="hy">-</span>nodejs<span class="hy">-</span>app" Devfile</div><div> \<span class="us">_</span><span class="us">_</span>/  \    Namespace: odo<span class="hy">-</span>dev</div><div> /  \<span class="us">_</span><span class="us">_</span>/    odo version: v3.6.0</div><div> \<span class="us">_</span><span class="us">_</span>/</div><div> </div><div>↪ Running on the cluster in Dev mode</div><div> •  Waiting for Kubernetes resources  ...</div><div> ⚠  Pod is Pending</div><div> ✓  Pod is Running</div><div> •  Syncing files into the container  ...</div><div> ✓  Syncing files into the container [148ms]</div><div> •  Building your application in container (command: install)  ...</div><div> ✓  Building your application in container (command: install) [7s]</div><div> •  Executing the application (command: debug)  ...</div><div> <span class="hy">-</span>  Forwarding from 127.0.0.1:20001 <span class="hy">-</span>&gt; 3000</div><div> </div><div> <span class="hy">-</span>  Forwarding from 127.0.0.1:20002 <span class="hy">-</span>&gt; 5858</div><div> </div><div> </div><div>↪ Dev mode</div><div> Status:</div><div> Watching for changes in the current directory /tmp/nodejs<span class="hy">-</span>debug</div><div> </div><div> Keyboard Commands:</div><div>[Ctrl+c] <span class="hy">-</span> Exit and delete resources from the cluster</div><div>     [p] <span class="hy">-</span> Manually apply local changes to the application on the cluster</div></div>
<div class="r" style="left:648px;top:1817px;width:14px;height:26px;background:transparent;box-shadow:inset 0 0 0 2px #cccccc"></div>
<div class="r" style="left:0px;top:1848px;width:3024px;height:44px;background:#3478c6;"></div>
<svg class="ic" style="left:29.8px;top:1855.5px" width="28" height="28" viewBox="0 0 16 16" ><path fill="#ffffff" d="M8.6 1c1.6.1 3.1.9 4.2 2 1.3 1.4 2 3.1 2 5.1 0 1.6-.6 3.1-1.6 4.4-1 1.2-2.4 2.1-4 2.4-1.6.3-3.2.1-4.6-.7-1.4-.8-2.5-2-3.1-3.5C.9 9.2.8 7.5 1.3 6c.5-1.6 1.4-2.9 2.8-3.8C5.4 1.3 7 .9 8.6 1zm.5 12.9c1.3-.3 2.5-1 3.4-2.1.8-1.1 1.3-2.4 1.2-3.8 0-1.6-.6-3.2-1.7-4.3-1-1-2.2-1.6-3.6-1.7-1.3-.1-2.7.2-3.8 1-1.1.8-1.9 1.9-2.3 3.3-.4 1.3-.4 2.7.2 4 .6 1.3 1.5 2.3 2.7 3 1.2.7 2.6.9 3.9.6zM7.9 7.5L10.3 5l.7.7-2.4 2.5 2.4 2.5-.7.7-2.4-2.5-2.4 2.5-.7-.7 2.4-2.5-2.4-2.5.7-.7 2.4 2.5z"/></svg>
<svg class="ic" style="left:86.6px;top:1856px" width="28" height="28" viewBox="0 0 16 16" ><path fill="#ffffff" d="M7.56 1h.88l6.54 12.26-.44.74H1.44L1 13.26 7.56 1zM8 2.28L2.28 13H13.7L8 2.28zM8.625 12v-1h-1.25v1h1.25zm-1.25-2V6h1.25v4h-1.25z"/></svg>
<svg class="ic" style="left:380px;top:1858px" width="28" height="22" viewBox="0 0 28 22"><path d="M7.2 17 H21.6 A4.3 4.3 0 0 0 21.8 8.5 A6.3 6.3 0 0 0 9.4 7.6 A4.8 4.8 0 0 0 7.2 17 Z" fill="none" stroke="#fff" stroke-width="2" stroke-linejoin="round"/></svg>
<svg class="ic" style="left:2906px;top:1857px" width="29" height="26" viewBox="0 0 29 26"><path d="M11 3 H27 V13.5 H23 L20.5 16.5 V13.5 H19" fill="none" stroke="#fff" stroke-width="2" stroke-linejoin="round"/><circle cx="9.5" cy="11" r="4.2" fill="none" stroke="#fff" stroke-width="2"/><path d="M2 25 C2 19 5 16.5 9.5 16.5 C14 16.5 17 19 17 25" fill="none" stroke="#fff" stroke-width="2"/><path d="M17.5 8.2 L19.5 10.2 L23.2 6.3" fill="none" stroke="#fff" stroke-width="1.6"/></svg>
<svg class="ic" style="left:2966.5px;top:1856px" width="28" height="28" viewBox="0 0 16 16" ><path fill="#ffffff" d="M13.377 10.573a7.63 7.63 0 0 1-.383-2.38V6.195a5.115 5.115 0 0 0-1.268-3.446 5.138 5.138 0 0 0-3.242-1.722c-.694-.072-1.4 0-2.07.227-.67.215-1.28.574-1.794 1.053a4.923 4.923 0 0 0-1.208 1.675 5.067 5.067 0 0 0-.431 2.022v2.2a7.61 7.61 0 0 1-.383 2.37L2 12.343l.479.658h3.505c0 .526.215 1.04.586 1.412.37.37.885.586 1.412.586.526 0 1.04-.215 1.411-.586s.587-.886.587-1.412h3.505l.478-.658-.586-1.77zm-4.69 3.147a.997.997 0 0 1-.705.299.997.997 0 0 1-.706-.3.997.997 0 0 1-.3-.705h1.999a.939.939 0 0 1-.287.706zm-5.515-1.71l.371-1.114a8.633 8.633 0 0 0 .443-2.691V6.004c0-.563.12-1.113.347-1.616.227-.514.55-.969.969-1.34.419-.382.91-.67 1.436-.837.538-.18 1.1-.24 1.65-.18a4.147 4.147 0 0 1 2.597 1.4 4.133 4.133 0 0 1 1.004 2.776v2.01c0 .909.144 1.818.443 2.691l.371 1.113h-9.63v-.012z"/></svg>
<div class="t" id="t0" style="left:136.00px;top:26.40px;font-size:22.8px;line-height:22.8px;color:#bbbbbb;letter-spacing:-0.904px;">OPENSHIFT</div>
<div class="t" id="t1" style="left:137.00px;top:83.40px;font-size:22.8px;line-height:22.8px;color:#cccccc;letter-spacing:-0.374px;font-weight:bold">APPLICATION EXPLORER</div>
<div class="t" id="t2" style="left:205.00px;top:125.99px;font-size:26px;line-height:26px;color:#cccccc;letter-spacing:0.705px;">Default KubeConfig</div>
<div class="t" id="t3" style="left:454.00px;top:128.19px;font-size:23.4px;line-height:23.4px;color:#929292;letter-spacing:0.723px;">/Users/pv...</div>
<div class="t" id="t4" style="left:206.00px;top:169.99px;font-size:26px;line-height:26px;color:#cccccc;letter-spacing:0.786px;">https://kubernetes.docker.int...</div>
<div class="t" id="t5" style="left:222.00px;top:213.99px;font-size:26px;line-height:26px;color:#cccccc;letter-spacing:1.340px;">odo-dev</div>
<div class="t" id="t6" style="left:136.75px;top:528.40px;font-size:22.8px;line-height:22.8px;color:#cccccc;letter-spacing:-0.103px;font-weight:bold">COMPONENTS</div>
<div class="t" id="t7" style="left:162.00px;top:569.99px;font-size:26px;line-height:26px;color:#ffffff;letter-spacing:0.895px;">my-nodejs-app (dev running)</div>
<div class="t" id="t8" style="left:135.75px;top:972.40px;font-size:22.8px;line-height:22.8px;color:#cccccc;letter-spacing:-0.410px;font-weight:bold">DEVFILE REGISTRIES</div>
<div class="t" id="t9" style="left:161.00px;top:1013.99px;font-size:26px;line-height:26px;color:#cccccc;letter-spacing:0.585px;">DefaultDevfileRegistry</div>
<div class="t" id="t10" style="left:135.75px;top:1416.40px;font-size:22.8px;line-height:22.8px;color:#cccccc;letter-spacing:-0.347px;font-weight:bold">DEBUG SESSIONS</div>
<div class="t" id="t11" style="left:672.50px;top:23.99px;font-size:26px;line-height:26px;color:#ffffff;letter-spacing:0.497px;font-style:italic">server.js</div>
<div class="t" id="t12" style="left:685.00px;top:80.99px;font-size:26px;line-height:26px;color:#a9a9a9;letter-spacing:0.337px;">server.js</div>
<div class="t" id="t13" style="left:855.00px;top:80.99px;font-size:26px;line-height:26px;color:#a9a9a9;letter-spacing:0.724px;">requestTimer</div>
<div class="t" id="t14" style="left:1086.00px;top:80.99px;font-size:26px;line-height:26px;color:#a9a9a9;letter-spacing:0.818px;">res.on('finish') callback</div>
<div class="t" id="t15" style="left:647.00px;top:982.40px;font-size:22.8px;line-height:22.8px;color:#969696;letter-spacing:-0.854px;">PROBLEMS</div>
<div class="t" id="t16" style="left:815.25px;top:982.40px;font-size:22.8px;line-height:22.8px;color:#969696;letter-spacing:-0.408px;">OUTPUT</div>
<div class="t" id="t17" style="left:955.25px;top:982.40px;font-size:22.8px;line-height:22.8px;color:#969696;letter-spacing:-0.744px;">DEBUG CONSOLE</div>
<div class="t" id="t18" style="left:1194.50px;top:982.40px;font-size:22.8px;line-height:22.8px;color:#e7e7e7;letter-spacing:-0.784px;">TERMINAL</div>
<div class="t" id="t19" style="left:2375.30px;top:982.08px;font-size:24px;line-height:24px;color:#cccccc;letter-spacing:0.173px;">/private/tmp/nodejs-debug</div>
<div class="t" id="t20" style="left:65.50px;top:1858.78px;font-size:24px;line-height:24px;color:#ffffff;letter-spacing:0.000px;">0</div>
<div class="t" id="t21" style="left:122.30px;top:1858.78px;font-size:24px;line-height:24px;color:#ffffff;letter-spacing:0.000px;">0</div>
<div class="t" id="t22" style="left:168.00px;top:1858.78px;font-size:24px;line-height:24px;color:#ffffff;letter-spacing:1.189px;">docker-desktop</div>
<div class="t" id="t23" style="left:414.70px;top:1858.78px;font-size:24px;line-height:24px;color:#ffffff;letter-spacing:0.679px;">OpenShift</div>
<div class="t" id="t24" style="left:559.70px;top:1858.78px;font-size:24px;line-height:24px;color:#ffffff;letter-spacing:1.495px;">odo-dev</div>
<div class="t" id="t25" style="left:2225.60px;top:1858.78px;font-size:24px;line-height:24px;color:#ffffff;letter-spacing:0.832px;">Ln 20, Col 27</div>
<div class="t" id="t26" style="left:2410.40px;top:1858.78px;font-size:24px;line-height:24px;color:#ffffff;letter-spacing:0.589px;">Spaces: 2</div>
<div class="t" id="t27" style="left:2554.60px;top:1858.78px;font-size:24px;line-height:24px;color:#ffffff;letter-spacing:1.164px;">UTF-8</div>
<div class="t" id="t28" style="left:2660.00px;top:1858.78px;font-size:24px;line-height:24px;color:#ffffff;letter-spacing:-0.848px;">LF</div>
<div class="t" id="t29" style="left:2718.20px;top:1858.78px;font-size:24px;line-height:24px;color:#ffffff;letter-spacing:6.184px;">{}</div>
<div class="t" id="t30" style="left:2756.40px;top:1858.78px;font-size:24px;line-height:24px;color:#ffffff;letter-spacing:0.514px;">JavaScript</div>
<div class="abs" style="left:400px;top:574px;width:302px;height:454px;border-radius:12px;background:linear-gradient(125deg,#c5c6c7 0%,#c3c2bf 25%,#c2c0bb 50%,#c1bfb9 100%);box-shadow:0 0 0 1px rgba(0,0,0,.22),0 10px 28px rgba(0,0,0,.28),0 1px 5px rgba(0,0,0,.2)"></div>
<div class="r" style="left:428px;top:686px;width:246px;height:2px;background:#a9a7a2;"></div>
<div class="r" style="left:428px;top:892px;width:246px;height:2px;background:#a9a7a2;"></div>
<div class="r" style="left:428px;top:960px;width:246px;height:2px;background:#a9a7a2;"></div>
<div class="r" style="left:410px;top:904px;width:282px;height:46px;background:#3067cb;border-radius:8px"></div>
<div class="t" id="t31" style="left:427.50px;top:595.89px;font-size:26px;line-height:26px;color:#1d1d1d;letter-spacing:1.394px;">Show Dev Terminal</div>
<div class="t" id="t32" style="left:427.50px;top:642.14px;font-size:26px;line-height:26px;color:#1d1d1d;letter-spacing:1.579px;">Stop Dev</div>
<div class="t" id="t33" style="left:427.00px;top:709.64px;font-size:26px;line-height:26px;color:#1d1d1d;letter-spacing:1.910px;">Describe</div>
<div class="t" id="t34" style="left:428.00px;top:755.89px;font-size:26px;line-height:26px;color:#1d1d1d;letter-spacing:1.545px;">Show Log</div>
<div class="t" id="t35" style="left:427.00px;top:801.64px;font-size:26px;line-height:26px;color:#1d1d1d;letter-spacing:1.525px;">Follow Log</div>
<div class="t" id="t36" style="left:428.00px;top:847.64px;font-size:26px;line-height:26px;color:#1d1d1d;letter-spacing:1.287px;">Open in Browser</div>
<div class="t" id="t37" style="left:427.00px;top:915.64px;font-size:26px;line-height:26px;color:#ffffff;letter-spacing:2.586px;">Debug</div>
<div class="t" id="t38" style="left:427.00px;top:983.79px;font-size:26px;line-height:26px;color:#1d1d1d;letter-spacing:0.955px;">Reveal in Explorer</div>
</div>
</body></html>
